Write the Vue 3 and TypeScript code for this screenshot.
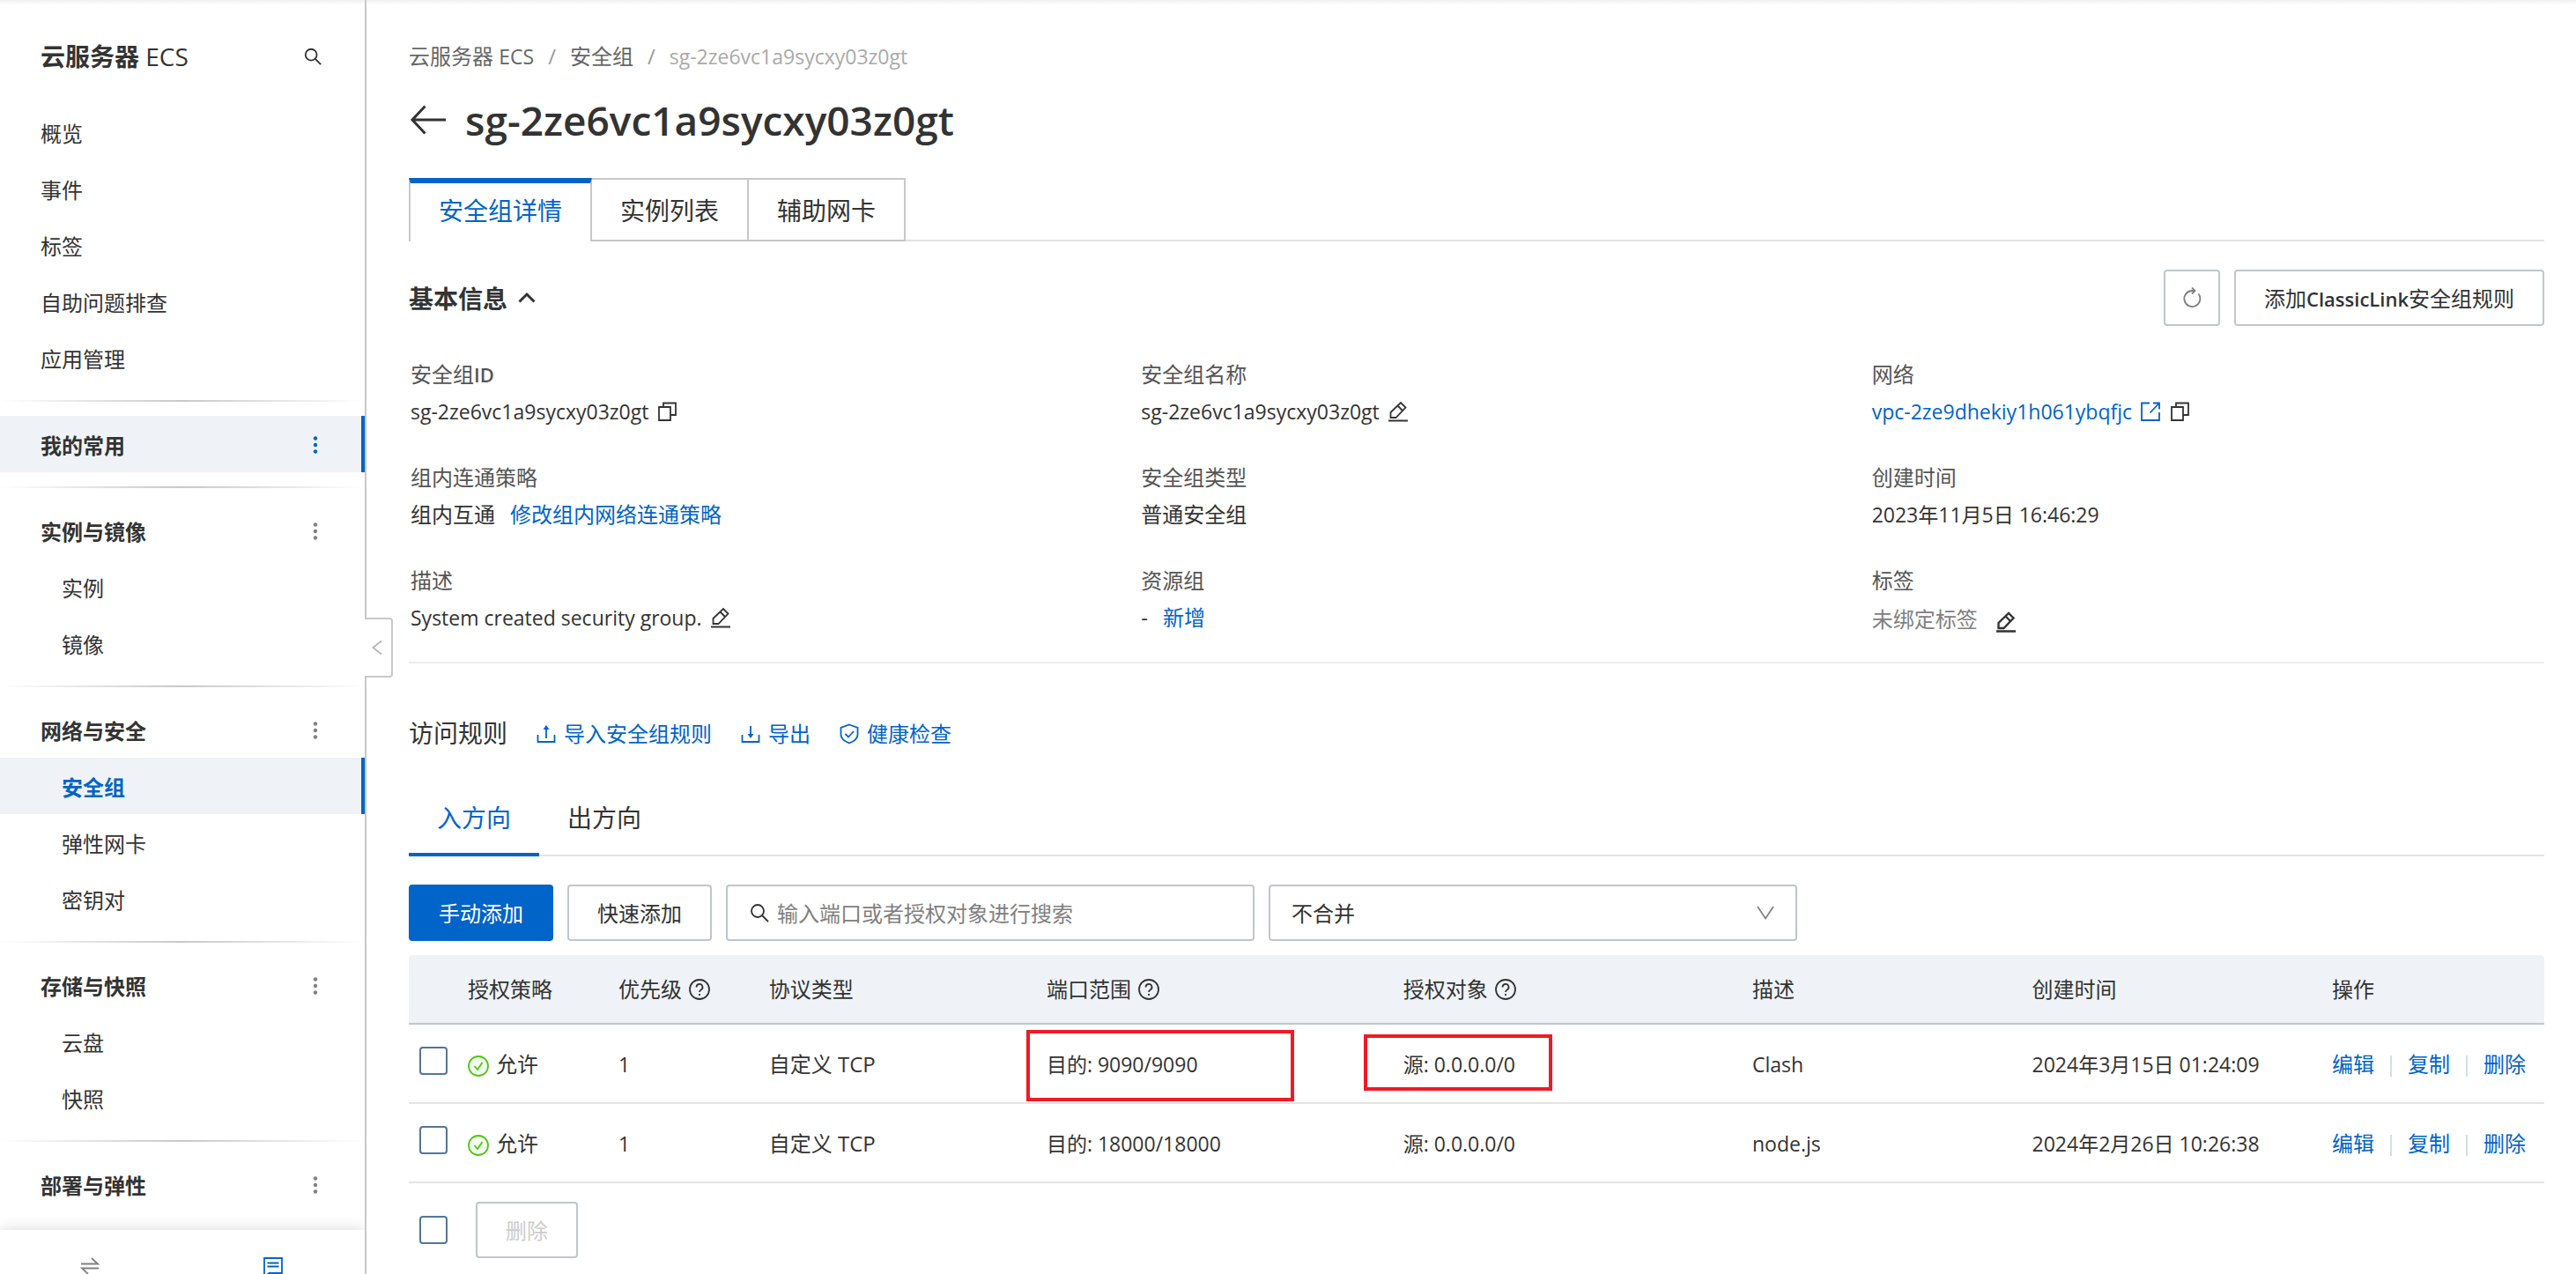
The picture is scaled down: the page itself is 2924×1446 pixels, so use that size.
<script setup lang="ts">
import { ref } from 'vue'

interface MenuEntry {
  label: string
  active?: boolean
}
interface MenuGroup {
  title: string
  active?: boolean
  items: MenuEntry[]
}
interface Rule {
  id: number
  priority: number
  protocol: string
  port: string
  source: string
  description: string
  created: string
  marked: boolean
}

const topItems = ['概览', '事件', '标签', '自助问题排查', '应用管理']

const groups: MenuGroup[] = [
  { title: '我的常用', active: true, items: [] },
  { title: '实例与镜像', items: [{ label: '实例' }, { label: '镜像' }] },
  {
    title: '网络与安全',
    items: [{ label: '安全组', active: true }, { label: '弹性网卡' }, { label: '密钥对' }],
  },
  { title: '存储与快照', items: [{ label: '云盘' }, { label: '快照' }] },
  { title: '部署与弹性', items: [] },
]

const pageTabs = ['安全组详情', '实例列表', '辅助网卡']
const directions = ['入方向', '出方向']
const pageTab = ref(0)
const direction = ref(0)
const keyword = ref('')
const merge = ref('none')
const selected = ref<number[]>([])

const rules: Rule[] = [
  {
    id: 1,
    priority: 1,
    protocol: '自定义 TCP',
    port: '目的: 9090/9090',
    source: '源: 0.0.0.0/0',
    description: 'Clash',
    created: '2024年3月15日 01:24:09',
    marked: true,
  },
  {
    id: 2,
    priority: 1,
    protocol: '自定义 TCP',
    port: '目的: 18000/18000',
    source: '源: 0.0.0.0/0',
    description: 'node.js',
    created: '2024年2月26日 10:26:38',
    marked: false,
  },
]
</script>

<template>
  <div class="page">
    <svg class="defs" aria-hidden="true">
      <symbol id="i-search" viewBox="0 0 24 24">
        <circle cx="10" cy="10" r="7" />
        <path d="M15 15l7 7" />
      </symbol>
      <symbol id="i-copy" viewBox="0 0 24 24">
        <path d="M3 7h13v15H3zM8 7V2.500h14V16h-6" />
      </symbol>
      <symbol id="i-edit" viewBox="0 0 24 24">
        <path d="M1 22.500h22M3.500 19v-6L15 2l5.500 5.500L9.500 19zM11.500 5.500l5.500 5.500" />
      </symbol>
      <symbol id="i-external" viewBox="0 0 24 24">
        <path d="M11 2.500H2V22h20v-9M15 2.500h7v7M22 2.500L11.500 13.500" />
      </symbol>
      <symbol id="i-help" viewBox="0 0 24 24">
        <circle cx="12" cy="12" r="11" />
        <path d="M8.500 9.500a3.500 3.500 0 1 1 5.200 3c-1.200.7-1.700 1.200-1.700 2.500M12 17v2" />
      </symbol>
    </svg>

    <aside class="sidebar">
      <header class="side-head">
        <h2 class="side-title">云服务器 <span>ECS</span></h2>
        <button type="button" class="icon-btn" aria-label="搜索">
          <svg class="ico search-sm"><use href="#i-search" /></svg>
        </button>
      </header>
      <nav class="menu">
        <ul>
          <li v-for="item in topItems" :key="item">
            <a href="#" class="item">{{ item }}</a>
          </li>
        </ul>
        <section v-for="group in groups" :key="group.title" class="group">
          <div class="item group-title" :class="{ marked: group.active }">
            <span>{{ group.title }}</span>
            <button type="button" class="icon-btn" :aria-label="group.title">
              <svg class="dots" viewBox="0 0 8 24">
                <circle cx="4" cy="3.500" r="2.200" />
                <circle cx="4" cy="11" r="2.200" />
                <circle cx="4" cy="18.500" r="2.200" />
              </svg>
            </button>
          </div>
          <ul v-if="group.items.length">
            <li v-for="item in group.items" :key="item.label">
              <a href="#" class="item sub" :class="{ marked: item.active }">{{ item.label }}</a>
            </li>
          </ul>
        </section>
      </nav>
      <footer class="side-foot">
        <button type="button" class="icon-btn" aria-label="切换">
          <svg class="ico swap" viewBox="0 0 24 24"><path d="M2 8.500h19L14 2M22 13.500H3l7 6.500" /></svg>
        </button>
        <button type="button" class="icon-btn" aria-label="反馈">
          <svg class="ico note" viewBox="0 0 24 24">
            <path d="M2 2h20v17H7.500L2 23zM5.500 7.500h13M5.500 11.500h13" />
          </svg>
        </button>
      </footer>
      <button type="button" class="handle" aria-label="收起">
        <svg class="ico" viewBox="0 0 24 24"><path d="M16 4.500L6.500 12l9.500 7.500" /></svg>
      </button>
    </aside>

    <main class="main">
      <nav class="crumbs">
        <a href="#">云服务器 <span class="latin">ECS</span></a>
        <i>/</i>
        <a href="#">安全组</a>
        <i>/</i>
        <span class="latin last">sg-2ze6vc1a9sycxy03z0gt</span>
      </nav>

      <div class="title-row">
        <button type="button" class="icon-btn" aria-label="返回">
          <svg class="back" viewBox="0 0 44 44"><path d="M42 22H4M18.500 6.500L4 22l14.500 15.500" /></svg>
        </button>
        <h1>sg-2ze6vc1a9sycxy03z0gt</h1>
      </div>

      <div class="tabs" role="tablist">
        <button
          v-for="(tab, i) in pageTabs"
          :key="tab"
          type="button"
          role="tab"
          :aria-selected="pageTab === i"
          :class="{ on: pageTab === i }"
          @click="pageTab = i"
        >
          {{ tab }}
        </button>
      </div>

      <div class="section-head">
        <h3>基本信息</h3>
        <svg class="ico caret" viewBox="0 0 24 24"><path d="M3.500 16.500L12 8l8.500 8.500" /></svg>
        <div class="actions">
          <button type="button" class="btn square" aria-label="刷新">
            <svg class="ico refresh" viewBox="0 0 24 24">
              <path d="M19.500 7.500A9 9 0 1 1 12 4h3M12 .5L15.500 4 12 7.500" />
            </svg>
          </button>
          <button type="button" class="btn">添加<b class="strong">ClassicLink</b>安全组规则</button>
        </div>
      </div>

      <dl class="info">
        <div>
          <dt>安全组<b class="strong">ID</b></dt>
          <dd>
            <span class="latin">sg-2ze6vc1a9sycxy03z0gt</span>
            <svg class="ico"><use href="#i-copy" /></svg>
          </dd>
        </div>
        <div>
          <dt>安全组名称</dt>
          <dd>
            <span class="latin">sg-2ze6vc1a9sycxy03z0gt</span>
            <svg class="ico"><use href="#i-edit" /></svg>
          </dd>
        </div>
        <div>
          <dt>网络</dt>
          <dd>
            <a href="#" class="latin">vpc-2ze9dhekiy1h061ybqfjc</a>
            <svg class="ico link-ico"><use href="#i-external" /></svg>
            <svg class="ico"><use href="#i-copy" /></svg>
          </dd>
        </div>
        <div>
          <dt>组内连通策略</dt>
          <dd class="wide">组内互通<a href="#">修改组内网络连通策略</a></dd>
        </div>
        <div>
          <dt>安全组类型</dt>
          <dd>普通安全组</dd>
        </div>
        <div>
          <dt>创建时间</dt>
          <dd><span class="latin">2023年11月5日 16:46:29</span></dd>
        </div>
        <div>
          <dt>描述</dt>
          <dd>
            <span class="latin">System created security group.</span>
            <svg class="ico"><use href="#i-edit" /></svg>
          </dd>
        </div>
        <div>
          <dt>资源组</dt>
          <dd class="wide">-<a href="#">新增</a></dd>
        </div>
        <div>
          <dt>标签</dt>
          <dd class="low"><span class="muted">未绑定标签</span><svg class="ico bold"><use href="#i-edit" /></svg></dd>
        </div>
      </dl>

      <div class="rules-head">
        <h3>访问规则</h3>
        <a href="#">
          <svg class="ico" viewBox="0 0 24 24"><path d="M2.500 13v8h19v-8M12 17V4" /><path class="fill" d="M8.500 7L12 2l3.500 5z" /></svg>
          导入安全组规则
        </a>
        <a href="#">
          <svg class="ico" viewBox="0 0 24 24"><path d="M2.500 13v8h19v-8M12 3v12" /><path class="fill" d="M8.500 12l3.500 5 3.500-5z" /></svg>
          导出
        </a>
        <a href="#">
          <svg class="ico" viewBox="0 0 24 24">
            <path d="M12 1.500l9.500 3.500v8c0 4-4.500 7.500-9.500 9.500-5-2-9.500-5.500-9.500-9.500V5zM7.500 12l3.500 3.500 6-6.500" />
          </svg>
          健康检查
        </a>
      </div>

      <div class="subtabs" role="tablist">
        <button
          v-for="(name, i) in directions"
          :key="name"
          type="button"
          role="tab"
          :aria-selected="direction === i"
          :class="{ on: direction === i }"
          @click="direction = i"
        >
          {{ name }}
        </button>
      </div>

      <div class="toolbar">
        <button type="button" class="btn primary">手动添加</button>
        <button type="button" class="btn">快速添加</button>
        <label class="field">
          <svg class="ico"><use href="#i-search" /></svg>
          <input v-model="keyword" type="text" placeholder="输入端口或者授权对象进行搜索" />
        </label>
        <label class="field">
          <select v-model="merge" aria-label="合并方式">
            <option value="none">不合并</option>
            <option value="merge">合并</option>
          </select>
          <svg class="ico arrow" viewBox="0 0 24 24"><path d="M3 5l9 13.500L21 5" /></svg>
        </label>
      </div>

      <table class="rules">
        <colgroup>
          <col class="c-check" />
          <col class="c-policy" />
          <col class="c-policy" />
          <col class="c-protocol" />
          <col class="c-port" />
          <col class="c-source" />
          <col class="c-desc" />
          <col class="c-time" />
          <col />
        </colgroup>
        <thead>
          <tr>
            <th></th>
            <th>授权策略</th>
            <th><span class="with-help">优先级<svg class="ico"><use href="#i-help" /></svg></span></th>
            <th>协议类型</th>
            <th><span class="with-help">端口范围<svg class="ico"><use href="#i-help" /></svg></span></th>
            <th><span class="with-help">授权对象<svg class="ico"><use href="#i-help" /></svg></span></th>
            <th>描述</th>
            <th>创建时间</th>
            <th>操作</th>
          </tr>
        </thead>
        <tbody>
          <tr v-for="rule in rules" :key="rule.id">
            <td class="check-cell">
              <input v-model="selected" type="checkbox" :value="rule.id" :aria-label="rule.port" />
            </td>
            <td>
              <span class="allow">
                <svg class="ico ok" viewBox="0 0 24 24">
                  <circle cx="12" cy="12" r="11" />
                  <path d="M7.500 12l3.500 4 5.500-8" />
                </svg>
                允许
              </span>
            </td>
            <td class="latin">{{ rule.priority }}</td>
            <td>{{ rule.protocol }}</td>
            <td class="latin">
              {{ rule.port }}
              <span v-if="rule.marked" class="mark mark-port"></span>
            </td>
            <td class="latin">
              {{ rule.source }}
              <span v-if="rule.marked" class="mark mark-source"></span>
            </td>
            <td class="latin">{{ rule.description }}</td>
            <td class="latin">{{ rule.created }}</td>
            <td>
              <span class="ops">
                <a href="#">编辑</a>
                <a href="#">复制</a>
                <a href="#">删除</a>
              </span>
            </td>
          </tr>
        </tbody>
      </table>

      <div class="batch">
        <input type="checkbox" aria-label="全选" />
        <button type="button" class="btn" disabled>删除</button>
      </div>
    </main>
  </div>
</template>

<style>
body {
  margin: 0;
  background: #fff;
}
</style>

<style scoped>
.page {
  display: flex;
  height: 100vh;
  overflow: hidden;
  background: linear-gradient(#f0f0f0, #fff 6px);
  color: #333;
  font-family: 'Open Sans', 'Noto Sans CJK SC', sans-serif;
  font-size: 24px;
  line-height: 36px;
}
.defs {
  position: absolute;
  width: 0;
  height: 0;
}
ul,
dl,
dd,
h1,
h2,
h3 {
  margin: 0;
  padding: 0;
  list-style: none;
}
button,
input,
select {
  font: inherit;
  color: inherit;
}
a {
  color: #0064c8;
  text-decoration: none;
}
.latin {
  font-size: 23px;
}
.strong {
  font-size: 22px;
  font-weight: 600;
}
.ico {
  flex: none;
  width: 24px;
  height: 24px;
  fill: none;
  stroke: currentColor;
  stroke-width: 1.8;
}
.fill {
  fill: currentColor;
  stroke: none;
}
.icon-btn {
  display: flex;
  padding: 0;
  border: 0;
  background: none;
}

/* sidebar */
.sidebar {
  position: relative;
  display: flex;
  flex: none;
  flex-direction: column;
  box-sizing: border-box;
  width: 416px;
  border-right: 2px solid #c8c8c8;
}
.side-head {
  display: flex;
  align-items: center;
  justify-content: space-between;
  flex: none;
  box-sizing: border-box;
  height: 118px;
  padding: 10px 48px 0 46px;
}
.side-title {
  font-size: 28px;
  line-height: 40px;
  font-weight: 700;
}
.side-title span {
  font-weight: 400;
}
.search-sm {
  width: 22px;
  height: 22px;
  stroke-width: 2;
}
.menu {
  flex: 1;
  min-height: 0;
  overflow: hidden;
}
.item {
  display: flex;
  align-items: center;
  justify-content: space-between;
  box-sizing: border-box;
  height: 64px;
  padding: 3px 52px 0 46px;
  color: #333;
}
.sub {
  padding-left: 70px;
}
.group {
  margin-top: 16px;
  padding-top: 18px;
  background: linear-gradient(90deg, #fff, #c8c8c8 50%, #fff) top / 100% 2px no-repeat;
}
.group-title {
  font-weight: 700;
}
.marked {
  border-right: 4px solid #0064c8;
  padding-right: 48px;
  background: #eff3f8;
}
.sub.marked {
  color: #0064c8;
  font-weight: 700;
}
.dots {
  width: 8px;
  height: 24px;
  fill: #808080;
}
.marked .dots {
  fill: #0064c8;
}
.side-foot {
  z-index: 1;
  display: flex;
  justify-content: space-between;
  flex: none;
  box-sizing: border-box;
  height: 50px;
  padding: 30px 92px 0 90px;
  overflow: hidden;
  background: #fff;
  box-shadow: 0 0 16px rgba(0, 0, 0, 0.16);
  clip-path: inset(-16px 0 0 0);
}
.swap {
  color: #808080;
}
.note {
  color: #0064c8;
}
.handle {
  position: absolute;
  top: 701px;
  right: -32px;
  display: flex;
  align-items: center;
  justify-content: center;
  width: 32px;
  height: 68px;
  padding: 0;
  border: 2px solid #c8c8c8;
  border-left: 0;
  border-radius: 0 4px 4px 0;
  background: #fff;
  color: #b4b4b4;
}

/* main column */
.main {
  flex: 1;
  min-width: 0;
  padding: 46px 36px 0 48px;
}
.crumbs {
  display: flex;
  gap: 16px;
  color: #999;
}
.crumbs a {
  color: #666;
}
.crumbs i {
  font-style: normal;
}
.crumbs .last {
  color: #aaa;
}
.title-row {
  display: flex;
  align-items: center;
  gap: 20px;
  margin-top: 22px;
}
.back {
  width: 44px;
  height: 44px;
  fill: none;
  stroke: #333;
  stroke-width: 3;
}
h1 {
  font-size: 46px;
  line-height: 64px;
  font-weight: 600;
}
.tabs {
  display: flex;
  margin-top: 34px;
  background: linear-gradient(#e3e3e3, #e3e3e3) bottom / 100% 2px no-repeat;
}
.tabs button {
  box-sizing: border-box;
  height: 72px;
  padding: 2px 32px 0;
  border: 2px solid #c8c8c8;
  border-left: 0;
  background: #fff;
  font-size: 28px;
  line-height: 40px;
}
.tabs .on {
  padding: 0 32px 4px;
  border-top: 6px solid #0064c8;
  border-bottom: 0;
  border-left: 2px solid #c8c8c8;
  color: #0064c8;
}
.section-head {
  display: flex;
  align-items: center;
  margin-top: 32px;
}
h3 {
  padding-top: 2px;
  font-size: 28px;
  line-height: 40px;
}
.caret {
  margin-left: 10px;
  stroke-width: 3;
}
.actions {
  display: flex;
  gap: 16px;
  margin-left: auto;
}
.btn {
  display: flex;
  align-items: center;
  justify-content: center;
  box-sizing: border-box;
  height: 64px;
  padding: 2px 32px 0;
  border: 2px solid #c0c6cc;
  border-radius: 4px;
  background: #fff;
}
.square {
  width: 64px;
  padding: 0;
  color: #808080;
}
.primary {
  border-color: #0064c8;
  background: #0064c8;
  color: #fff;
}
.btn:disabled {
  color: #ccc;
}
.info {
  display: grid;
  grid-template-columns: repeat(3, 1fr);
  gap: 39px 68px;
  margin-top: 37px;
  padding: 0 2px 32px;
  border-bottom: 2px solid #ededed;
}
dt {
  color: #555;
}
dd {
  display: flex;
  align-items: center;
  gap: 9px;
  height: 36px;
  margin-top: 6px;
}
.wide {
  gap: 17px;
}
.low {
  gap: 20px;
  margin-top: 10px;
  height: 32px;
}
.muted {
  color: #808080;
}
.bold {
  margin-top: 5px;
  stroke-width: 2.4;
}
.link-ico {
  color: #0064c8;
}

/* rules */
.rules-head {
  display: flex;
  align-items: center;
  gap: 32px;
  margin-top: 59px;
}
.rules-head h3 {
  padding-top: 0;
  font-weight: 400;
}
.rules-head a {
  display: flex;
  align-items: center;
  gap: 8px;
  padding-top: 2px;
}
.subtabs {
  display: flex;
  margin-top: 36px;
  background: linear-gradient(#e3e3e3, #e3e3e3) bottom / 100% 2px no-repeat;
}
.subtabs button {
  box-sizing: border-box;
  height: 84px;
  padding: 0 32px;
  border: 0;
  border-bottom: 4px solid transparent;
  background: none;
  font-size: 28px;
  line-height: 40px;
}
.subtabs .on {
  border-color: #0064c8;
  color: #0064c8;
}
.toolbar {
  display: flex;
  gap: 16px;
  margin-top: 32px;
}
.field {
  display: flex;
  align-items: center;
  gap: 8px;
  box-sizing: border-box;
  width: 600px;
  height: 64px;
  padding: 0 22px 0 24px;
  border: 2px solid #c0c6cc;
  border-radius: 4px;
}
.field input,
.field select {
  flex: 1;
  min-width: 0;
  padding: 2px 0 0;
  border: 0;
  outline: 0;
  appearance: none;
  background: none;
}
.field input::placeholder {
  color: #808080;
  opacity: 1;
}
.arrow {
  color: #808080;
}
.rules {
  width: 100%;
  margin-top: 16px;
  border-spacing: 0;
  table-layout: fixed;
}
.c-check {
  width: 51px;
}
.c-policy {
  width: 7.05%;
}
.c-protocol {
  width: 13%;
}
.c-port {
  width: 16.7%;
}
.c-source {
  width: 16.35%;
}
.c-desc {
  width: 13.1%;
}
.c-time {
  width: 14.05%;
}
th,
td {
  position: relative;
  box-sizing: border-box;
  padding: 0 0 0 16px;
  text-align: left;
  white-space: nowrap;
}
th {
  height: 79px;
  border-bottom: 2px solid #c0c6cc;
  background: #eff3f8;
  font-weight: 400;
}
th:first-child {
  border-top-left-radius: 4px;
}
th:last-child {
  border-top-right-radius: 4px;
}
td {
  height: 90px;
  padding-top: 2px;
  border-bottom: 2px solid #e3e3e3;
}
.with-help,
.allow {
  display: flex;
  align-items: center;
  gap: 8px;
}
.with-help .ico {
  overflow: visible;
}
.ok {
  margin-top: 4px;
  overflow: visible;
  fill: #f1fdeb;
  stroke: #52c41a;
}
.check-cell {
  padding: 0 0 6px 12px;
}
input[type='checkbox'] {
  display: block;
  box-sizing: border-box;
  width: 32px;
  height: 32px;
  margin: 0;
  border: 2px solid #53759b;
  border-radius: 4px;
  appearance: none;
  background: #fff;
}
input[type='checkbox']:checked {
  background: #0064c8;
}
.ops {
  display: flex;
}
.ops a + a {
  margin-left: 18px;
  padding-left: 20px;
  background: linear-gradient(#d3dee6, #d3dee6) left bottom 4px / 2px 24px no-repeat;
}
.mark {
  position: absolute;
  box-sizing: border-box;
  border: 4px solid #ed1c24;
}
.mark-port {
  top: 6px;
  left: -7px;
  width: 304px;
  height: 81px;
}
.mark-source {
  top: 11px;
  left: -29px;
  width: 214px;
  height: 64px;
}
.batch {
  display: flex;
  align-items: center;
  gap: 32px;
  margin-top: 21px;
  padding-left: 12px;
}
</style>
